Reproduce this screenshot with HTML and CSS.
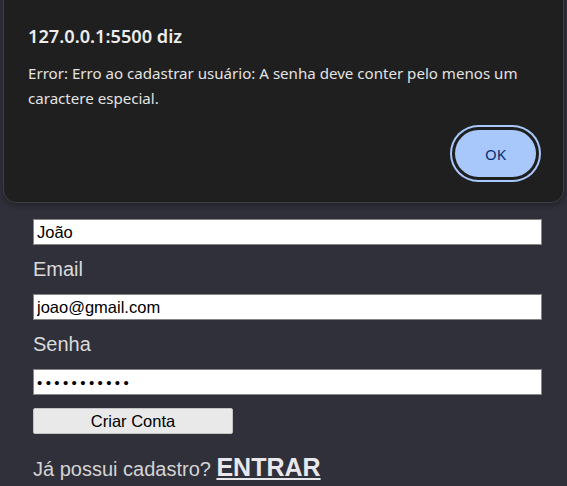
FILE: index.html
```html
<!DOCTYPE html>
<html lang="pt-BR">
<head>
<meta charset="utf-8">
<title>Cadastro</title>
<link rel="stylesheet" href="styles.css">
</head>
<body>
  <main class="page">
    <form class="form">
      <h1 class="form-title">Cadastro</h1>
      <label class="field-label" for="nome">Nome</label>
      <input class="field-input" id="nome" type="text" value="João">
      <label class="field-label" for="email">Email</label>
      <input class="field-input" id="email" type="email" value="joao@gmail.com">
      <label class="field-label" for="senha">Senha</label>
      <input class="field-input field-password" id="senha" type="password" value="abcdefghijk">
      <button class="submit" type="button">Criar Conta</button>
      <p class="login-line">Já possui cadastro? <a class="login-link" href="#">ENTRAR</a></p>
    </form>
  </main>

  <div class="dialog" role="alertdialog">
    <div class="dialog-title">127.0.0.1:5500 diz</div>
    <div class="dialog-message">Error: Erro ao cadastrar usuário: A senha deve conter pelo menos um caractere especial.</div>
    <div class="dialog-actions">
      <button class="dialog-ok" type="button">OK</button>
    </div>
  </div>
</body>
</html>
```

FILE: styles.css
```css
html, body {
  margin: 0;
  padding: 0;
}

body {
  background: #30303b;
  font-family: "Liberation Sans", Arial, sans-serif;
  color: #dcdcdc;
  height: 486px;
  overflow: hidden;
}

.page {
  padding: 0 25px 0 33px;
}

.form {
  display: flex;
  flex-direction: column;
  align-items: flex-start;
  width: 509px;
  padding-top: 112px;
}

.form-title {
  margin: 0 0 10px;
  font-size: 32px;
  line-height: 37px;
  color: #e6e6e6;
}

.field-label {
  display: block;
  font-size: 20px;
  line-height: 23px;
  margin: 13px 0 13px;
  color: #dadada;
}

.form-title + .field-label {
  margin-top: 24px;
}

.field-input {
  box-sizing: border-box;
  width: 509px;
  height: 26px;
  margin: 0;
  padding: 1px 3px 0;
  border: 1px solid #858585;
  border-radius: 0;
  background: #ffffff;
  color: #000000;
  font-family: "Liberation Sans", Arial, sans-serif;
  font-size: 16.5px;
  outline: none;
}

.field-password {
  font-size: 15px;
  letter-spacing: 3.4px;
}

.submit {
  box-sizing: border-box;
  width: 200px;
  height: 26px;
  margin-top: 13px;
  padding: 0;
  border: 1px solid #c4c4c4;
  border-radius: 2px;
  background: #e9e9e9;
  color: #000000;
  font-family: "Liberation Sans", Arial, sans-serif;
  font-size: 16.5px;
  line-height: 24px;
}

.login-line {
  margin: 19px 0 0;
  font-size: 20px;
  color: #d4d4d4;
  white-space: nowrap;
}

.login-link {
  font-size: 25px;
  font-weight: bold;
  color: #e8e8ec;
  text-decoration: underline;
  text-underline-offset: 2px;
}

/* alert dialog overlay */
.dialog {
  position: absolute;
  left: 3px;
  top: -20px;
  width: 561px;
  height: 223px;
  box-sizing: border-box;
  padding: 43px 21px 0 24px;
  background: #1f1f1f;
  border: 1px solid #3e3e44;
  border-radius: 13px;
  box-shadow: 0 2px 6px rgba(0, 0, 0, 0.35);
  font-family: "Noto Sans", "Open Sans", sans-serif;
  color: #e3e3e3;
}

.dialog-title {
  font-size: 18.2px;
  line-height: 24px;
  font-weight: 600;
  color: #ececec;
}

.dialog-message {
  margin-top: 13px;
  font-size: 15.1px;
  line-height: 25px;
  color: #e3e3e3;
  padding-right: 4px;
}

.dialog-actions {
  display: flex;
  justify-content: flex-end;
  margin-top: 19px;
  padding-right: 1px;
}

.dialog-ok {
  width: 81px;
  height: 47px;
  margin-right: 5px;
  border: 0;
  border-radius: 999px;
  background: #a8c7fa;
  box-shadow: 0 0 0 3px #1f1f1f, 0 0 0 5px #a8c7fa;
  color: #062e6f;
  font-family: "Noto Sans", "Open Sans", sans-serif;
  font-size: 15px;
  font-weight: 400;
}
```
